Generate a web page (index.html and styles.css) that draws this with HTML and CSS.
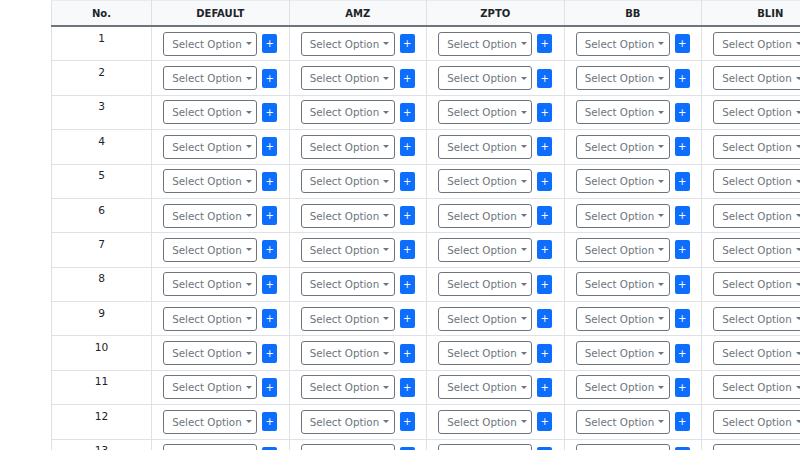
FILE: index.html
```html
<!DOCTYPE html>
<html lang="en">
<head>
    <meta charset="UTF-8">
    <meta name="viewport" content="width=device-width, initial-scale=1.0">
    <title>Store Mapping</title>
    <link rel="stylesheet" href="styles.css">
</head>
<body>
    <div class="table-wrap">
        <table class="map-table">
            <colgroup>
                <col class="c-no">
                <col class="c-store">
                <col class="c-store">
                <col class="c-store">
                <col class="c-store">
                <col class="c-store">
            </colgroup>
            <thead>
                <tr>
                    <th>No.</th>
                    <th>DEFAULT</th>
                    <th>AMZ</th>
                    <th>ZPTO</th>
                    <th>BB</th>
                    <th>BLIN</th>
                </tr>
            </thead>
            <tbody id="rows"></tbody>
        </table>
    </div>

    <script>
        let stores = ['DEFAULT', 'AMZ', 'ZPTO', 'BB', 'BLIN'];
        let tbody = document.getElementById("rows");

        for (let i = 1; i <= 13; i++) {
            let tr = document.createElement("tr");
            let html = `<td class="num">${i}</td>`;
            stores.forEach(s => {
                html += `<td><div class="pick">
                    <button class="select-btn" data-store="${s}">Select Option <span class="caret"></span></button>
                    <button class="add-btn">+</button>
                </div></td>`;
            });
            tr.innerHTML = html;
            tbody.appendChild(tr);
        }
    </script>
</body>
</html>
```

FILE: styles.css
```css
body { margin: 0; padding: 0; font-family: "DejaVu Sans", sans-serif; color: #212529; background: #fff; overflow: hidden; }

.table-wrap { padding-left: 51px; width: 900px; }

.map-table {
    border-collapse: collapse;
    table-layout: fixed;
    width: 788px;
    font-size: 10.4px;
}
.c-no { width: 100px; }
.c-store { width: 137.5px; }

.map-table th, .map-table td {
    border: 1px solid #dee2e6;
    text-align: center;
    vertical-align: top;
    padding: 4.7px;
    white-space: nowrap;
}

.map-table th {
    background-color: #f8f9fa;
    font-weight: bold;
    font-size: 10px;
    height: 16px;
    line-height: 16px;
    padding: 5px 4.8px 3px;
    border-top: 1px solid #e9ecef;
    border-bottom: 2px solid #6c757d;
}

.map-table td { height: 24px; }
.map-table td.num { line-height: 13px; font-size: 10.6px; }

.pick { display: flex; justify-content: center; align-items: center; gap: 5px; }

.select-btn {
    width: 94px;
    height: 24px;
    padding: 0 7px 0 8px;
    border: 1px solid #6c757d;
    border-radius: 3px;
    background: #fff;
    color: #6c757d;
    font-family: "DejaVu Sans", sans-serif;
    font-size: 10.3px;
    white-space: nowrap;
    display: flex;
    align-items: center;
    justify-content: space-between;
    cursor: pointer;
}

.caret {
    display: inline-block;
    border-top: 3px solid #6c757d;
    border-left: 3px solid transparent;
    border-right: 3px solid transparent;
    margin-left: 4px;
}

.add-btn {
    width: 15px;
    height: 19px;
    padding: 0;
    border: none;
    border-radius: 2px;
    background-color: #0d6efd;
    color: #fff;
    font-family: "DejaVu Sans", sans-serif;
    font-size: 10px;
    line-height: 19px;
    cursor: pointer;
}
```
